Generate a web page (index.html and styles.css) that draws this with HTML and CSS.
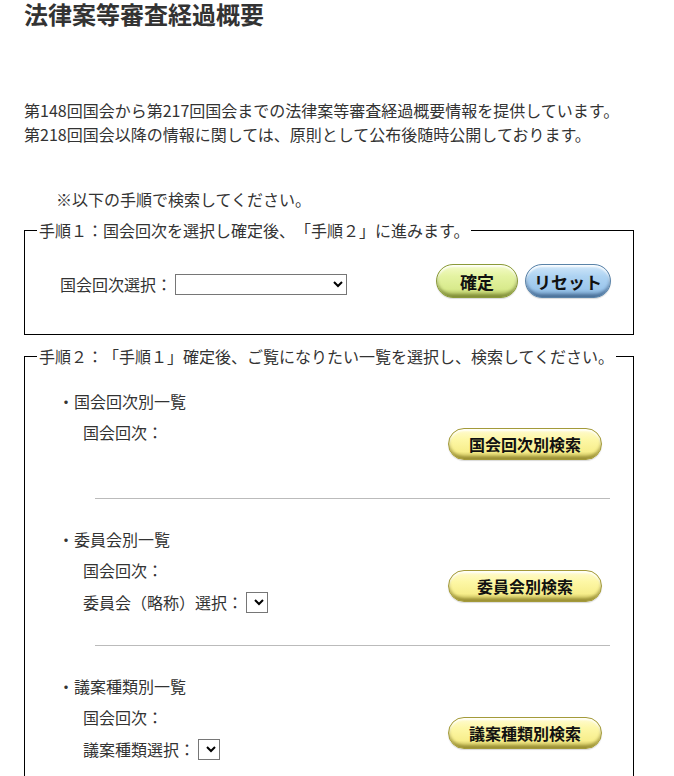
FILE: index.html
```html
<!DOCTYPE html>
<html lang="ja">
<head>
<meta charset="utf-8">
<title>法律案等審査経過概要</title>
<link rel="stylesheet" href="styles.css">
</head>
<body>
<div class="page">
  <h1 class="title">法律案等審査経過概要</h1>
  <p class="intro">第148回国会から第217回国会までの法律案等審査経過概要情報を提供しています。<br>第218回国会以降の情報に関しては、原則として公布後随時公開しております。</p>
  <p class="note">※以下の手順で検索してください。</p>

  <fieldset class="step step1">
    <legend class="step-legend">手順１：国会回次を選択し確定後、「手順２」に進みます。</legend>
    <div class="step1-row">
      <div class="field step1-field">
        <span>国会回次選択：</span>
        <select class="select select-wide"><option></option></select>
      </div>
      <div class="btns">
        <button class="pill pill-green">確定</button>
        <button class="pill pill-blue">リセット</button>
      </div>
    </div>
  </fieldset>

  <fieldset class="step step2">
    <legend class="step-legend">手順２：「手順１」確定後、ご覧になりたい一覧を選択し、検索してください。</legend>

    <div class="group">
      <div class="group-title">・国会回次別一覧</div>
      <div class="group-body group-single">
        <div class="fields">
          <div class="field">国会回次：</div>
        </div>
        <button class="pill pill-yellow pill-search">国会回次別検索</button>
      </div>
    </div>
    <hr class="sep">

    <div class="group">
      <div class="group-title">・委員会別一覧</div>
      <div class="group-body">
        <div class="fields">
          <div class="field">国会回次：</div>
          <div class="field"><span>委員会（略称）選択：</span><select class="select select-small"><option></option></select></div>
        </div>
        <button class="pill pill-yellow pill-search">委員会別検索</button>
      </div>
    </div>
    <hr class="sep">

    <div class="group">
      <div class="group-title">・議案種類別一覧</div>
      <div class="group-body">
        <div class="fields">
          <div class="field">国会回次：</div>
          <div class="field"><span>議案種類選択：</span><select class="select select-small"><option></option></select></div>
        </div>
        <button class="pill pill-yellow pill-search">議案種類別検索</button>
      </div>
    </div>
  </fieldset>
</div>
</body>
</html>
```

FILE: styles.css
```css
html, body {
  margin: 0;
  padding: 0;
  background: #fff;
}
body {
  font-family: "Noto Sans CJK JP", "Noto Sans", sans-serif;
  font-size: 16px;
  line-height: 24px;
  color: #333;
  text-spacing-trim: space-all;
}
.page {
  padding-left: 24px;
  padding-top: 1px;
  width: 610px;
}
.title {
  margin: -1px 0 70px;
  font-size: 24px;
  line-height: 28px;
  font-weight: bold;
  color: #333;
}
.intro {
  margin: 0;
}
.note {
  margin: 41px 0 0;
  padding-left: 32px;
}
.step {
  margin: 7px 0 0;
  border: 1px solid #000;
  padding: 0 12px;
  min-width: 0;
}
.step2 {
  margin-top: 9px;
  padding-top: 21px;
  padding-bottom: 20px;
}
.step-legend {
  padding: 0 2px;
  line-height: 24px;
}
.step1-row {
  display: flex;
  justify-content: space-between;
  align-items: center;
  padding: 20px 10px 34px 23px;
}
.step1-field {
  margin-top: 6px;
}
.field {
  display: flex;
  align-items: center;
  height: 32px;
}
.select {
  font-family: inherit;
  font-size: 13px;
  border: 1px solid #767676;
  border-radius: 0;
  background: #fff;
  color: #000;
  box-sizing: border-box;
  height: 21px;
  margin-left: 3px;
  padding: 0;
}
.select-wide {
  width: 172px;
}
.select-small {
  width: 22px;
}
.btns {
  display: flex;
  gap: 7px;
}
.pill {
  font-family: inherit;
  font-weight: bold;
  font-size: 17px;
  line-height: 1;
  color: #111;
  height: 34px;
  border-radius: 17px;
  padding: 0;
  cursor: pointer;
}
.pill-green {
  width: 82px;
  border: 1px solid #8a9a3a;
  background: linear-gradient(to bottom, #f4fbc8 0%, #e4f3a2 35%, #d8ea8c 75%, #a9b957 100%);
  box-shadow: inset 0 -3px 3px rgba(80, 90, 20, 0.45), inset 0 2px 2px rgba(255, 255, 255, 0.9), 0 1px 1px rgba(0, 0, 0, 0.15);
}
.pill-blue {
  width: 86px;
  border: 1px solid #5a83a8;
  background: linear-gradient(to bottom, #d2e8fa 0%, #aed3f2 35%, #9cc6ec 75%, #6f9cc4 100%);
  box-shadow: inset 0 -3px 3px rgba(30, 60, 100, 0.45), inset 0 2px 2px rgba(255, 255, 255, 0.9), 0 1px 1px rgba(0, 0, 0, 0.15);
}
.pill-yellow {
  border: 1px solid #a39a3a;
  background: linear-gradient(to bottom, #fffbd2 0%, #fdf7a6 35%, #f7ee8c 75%, #c7bb55 100%);
  box-shadow: inset 0 -3px 3px rgba(100, 90, 10, 0.45), inset 0 2px 2px rgba(255, 255, 255, 0.9), 0 1px 1px rgba(0, 0, 0, 0.15);
}
.pill-search {
  width: 154px;
  height: 32px;
  border-radius: 16px;
  font-size: 16px;
  margin-right: 19px;
}
.group-title {
  padding-left: 21px;
  line-height: 24px;
}
.group-body {
  display: flex;
  justify-content: space-between;
  align-items: center;
  margin-top: 3px;
}
.group-single {
  min-height: 55px;
}
.group-single .fields {
  align-self: flex-start;
}
.fields {
  padding-left: 46px;
}
.sep {
  border: 0;
  border-top: 1px solid #bbb;
  height: 0;
  margin: 27px 11px 28px 58px;
}
```
